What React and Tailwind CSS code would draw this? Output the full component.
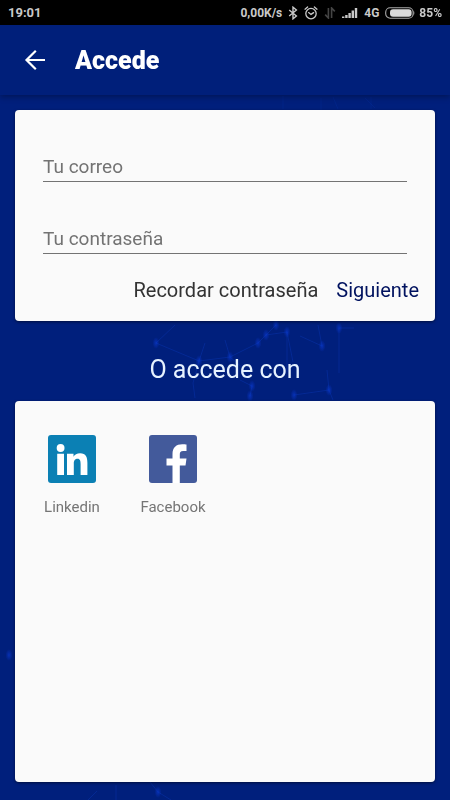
import React from 'react';

function BluetoothIcon() {
  return (
    <svg viewBox="0 0 10 14" className="h-3.5 w-2.5" fill="none" stroke="#c9c9c9" strokeWidth="1.4" aria-hidden="true">
      <path d="M1.2 4 8.400 10 5 12.8V1.2L8.400 4 1.2 10" />
    </svg>
  );
}

function AlarmIcon() {
  return (
    <svg viewBox="0 0 14 14" className="size-3.5" fill="none" stroke="#c9c9c9" strokeWidth="1.3" strokeLinecap="round" aria-hidden="true">
      <circle cx="7" cy="7.6" r="5.2" />
      <path d="M1 3.2 3.6 1M13 3.2 10.4 1M4.6 6.6 7 8.4 9.6 6.6" />
    </svg>
  );
}

function DataIcon() {
  return (
    <svg viewBox="0 0 12 12" className="size-3" fill="none" stroke="#454545" strokeWidth="1.6" aria-hidden="true">
      <path d="M4.4 1v10L1.2 7.6M7.6 11V1l3.2 3.4" />
    </svg>
  );
}

function SignalIcon() {
  return (
    <svg viewBox="0 0 16 12" className="h-3 w-4" fill="#c9c9c9" aria-hidden="true">
      <path d="M0 9.500h2.400V11H0zM3.2 8h2.400v3H3.200zM6.400 6h2.400v5H6.400zM9.600 3.500H12V11H9.600zM12.800 1h2.400v10h-2.400z" />
    </svg>
  );
}

function BatteryIcon() {
  return (
    <svg viewBox="0 0 30 12" className="h-3 w-[30px]" aria-hidden="true">
      <rect x="0.7" y="0.8" width="27.4" height="10.4" rx="4.5" fill="none" stroke="#a8a8a8" strokeWidth="1.1" />
      <path d="M28.5 3.5q1.8 2.5 0 5z" fill="#a8a8a8" />
      <rect x="5" y="2.3" width="21.6" height="7.4" rx="3" fill="#dadada" />
    </svg>
  );
}

function StatusBar() {
  return (
    <div className="flex h-[25px] shrink-0 items-center justify-between bg-black px-2 text-xs font-bold text-[#c9c9c9]">
      <span className="text-[13px]">19:01</span>
      <div className="flex items-center gap-1.5">
        <span>0,00K/s</span>
        <BluetoothIcon />
        <AlarmIcon />
        <DataIcon />
        <SignalIcon />
        <span>4G</span>
        <div className="flex items-center gap-1">
          <BatteryIcon />
          <span>85%</span>
        </div>
      </div>
    </div>
  );
}

const nodes = [
  [156, 343], [199, 361], [230, 357], [258, 343], [266, 335], [287, 332], [276, 325],
  [322, 346], [339, 328], [252, 386], [294, 395], [329, 390], [158, 792], [9, 655], [250, 396],
];

function NetworkBackground() {
  return (
    <svg viewBox="0 0 450 800" preserveAspectRatio="xMidYMid slice" className="absolute inset-0 -z-10 size-full" aria-hidden="true">
      <defs>
        <radialGradient id="glow">
          <stop offset="0" stopColor="#0b3cd8" stopOpacity="0.6" />
          <stop offset="1" stopColor="#0b3cd8" stopOpacity="0" />
        </radialGradient>
      </defs>
      <g fill="none" stroke="#0c3fc4" strokeWidth="0.8" opacity="0.42">
        <path d="M156 343 199 361 230 357 258 343 266 335 276 325M266 335 287 332M156 343 175 325M294 395 329 390M300 336 322 346 318 325M339 328h15M250 396 252 386 240 380M230 357 225 340M230 357l14 12M199 361l-6 22 2 15M199 361l6-18M287 332v40M287 332l6 30M339 328v45M329 390l-2-20M329 390l4 10M88 800l9-9M158 792l13 8M158 792l-8-10M116 785v15" />
        <path d="M283 96v13M321 98v12M333 97l5 12M365 98l10 10M371 97v12" opacity="0.5" />
      </g>
      {nodes.map(([x, y]) => (
        <ellipse key={`${x}-${y}`} cx={x} cy={y} rx="3.5" ry="6" fill="url(#glow)" />
      ))}
    </svg>
  );
}

function TextField({ id, label, type }) {
  return (
    <input
      id={id}
      type={type}
      aria-label={label}
      placeholder={label}
      className="block h-9 w-full rounded-none border-b border-[#737373] bg-transparent pt-1.5 text-[19px] leading-7 text-[#333333] outline-none placeholder:text-[#737373]"
    />
  );
}

function LinkedinLogo() {
  return (
    <svg viewBox="0 0 48 48" className="size-12" aria-hidden="true">
      <rect width="48" height="48" rx="3" fill="#0b80b4" />
      <g fill="#fff">
        <circle cx="12.6" cy="13" r="3.9" />
        <path d="M9.2 18.7h6.8V40H9.2zM19 18.7h6.5v3c1.2-2 3.4-3.5 6.600-3.5 5.900 0 7.300 3.900 7.300 9.600V40h-6.800V29c0-3-.5-5.300-3-5.300-3 0-3.800 2.200-3.800 5.200V40H19z" />
      </g>
    </svg>
  );
}

function FacebookLogo() {
  return (
    <svg viewBox="0 0 48 48" className="size-12" aria-hidden="true">
      <rect width="48" height="48" rx="3" fill="#435a9b" />
      <path d="M23.5 48V30.5h-6V23.5h6v-4.5c0-6.600 3.800-9.800 9.800-9.800 1.800 0 3.400.1 4.200.3v6.600h-3.300c-2.800 0-3.400 1.500-3.400 3.500v3.900h6.700l-1 7h-5.700V48z" fill="#fff" />
    </svg>
  );
}

function SocialButton({ label, children }) {
  return (
    <button type="button" className="flex w-[100px] flex-col items-center gap-3.5 text-[15px] leading-5 text-[#757575]">
      {children}
      <span>{label}</span>
    </button>
  );
}

export default function App() {
  return (
    <div className="relative isolate flex min-h-screen flex-col bg-[#001f7c] font-[Roboto,sans-serif]">
      <NetworkBackground />
      <StatusBar />
      <header className="flex h-[70px] shrink-0 items-center bg-[#001f7a] px-[23px] shadow-[0_2px_6px_rgba(0,0,0,0.3)]">
        <button type="button" aria-label="Volver" className="text-white">
          <svg viewBox="0 0 24 24" className="size-6" fill="none" stroke="currentColor" strokeWidth="2.2" aria-hidden="true">
            <path d="M22 12H3.5M12.8 2.8 3.5 12l9.3 9.2" />
          </svg>
        </button>
        <h1 className="ml-7 pt-0.5 text-[25px] leading-8 font-black text-white">Accede</h1>
      </header>
      <main className="flex grow flex-col px-[15px] pt-[15px] pb-[18px]">
        <form className="rounded bg-[#fafafa] pt-9 pb-[15px] shadow-[0_1px_3px_rgba(0,0,0,0.5)]">
          <div className="flex flex-col gap-9 px-7">
            <TextField id="email" label="Tu correo" type="email" />
            <TextField id="password" label="Tu contraseña" type="password" />
          </div>
          <div className="mt-5 flex justify-end gap-[18px] px-4 text-xl leading-8">
            <button type="button" className="text-[#333333]">Recordar contraseña</button>
            <button type="submit" className="text-[#00125f]">Siguiente</button>
          </div>
        </form>
        <h2 className="pt-[33px] pb-[15px] text-center text-[25px] leading-8 text-[#e6f2ff]">O accede con</h2>
        <section className="flex grow items-start gap-px rounded bg-[#fafafa] px-[7px] pt-[34px] shadow-[0_1px_3px_rgba(0,0,0,0.5)]">
          <SocialButton label="Linkedin"><LinkedinLogo /></SocialButton>
          <SocialButton label="Facebook"><FacebookLogo /></SocialButton>
        </section>
      </main>
    </div>
  );
}
